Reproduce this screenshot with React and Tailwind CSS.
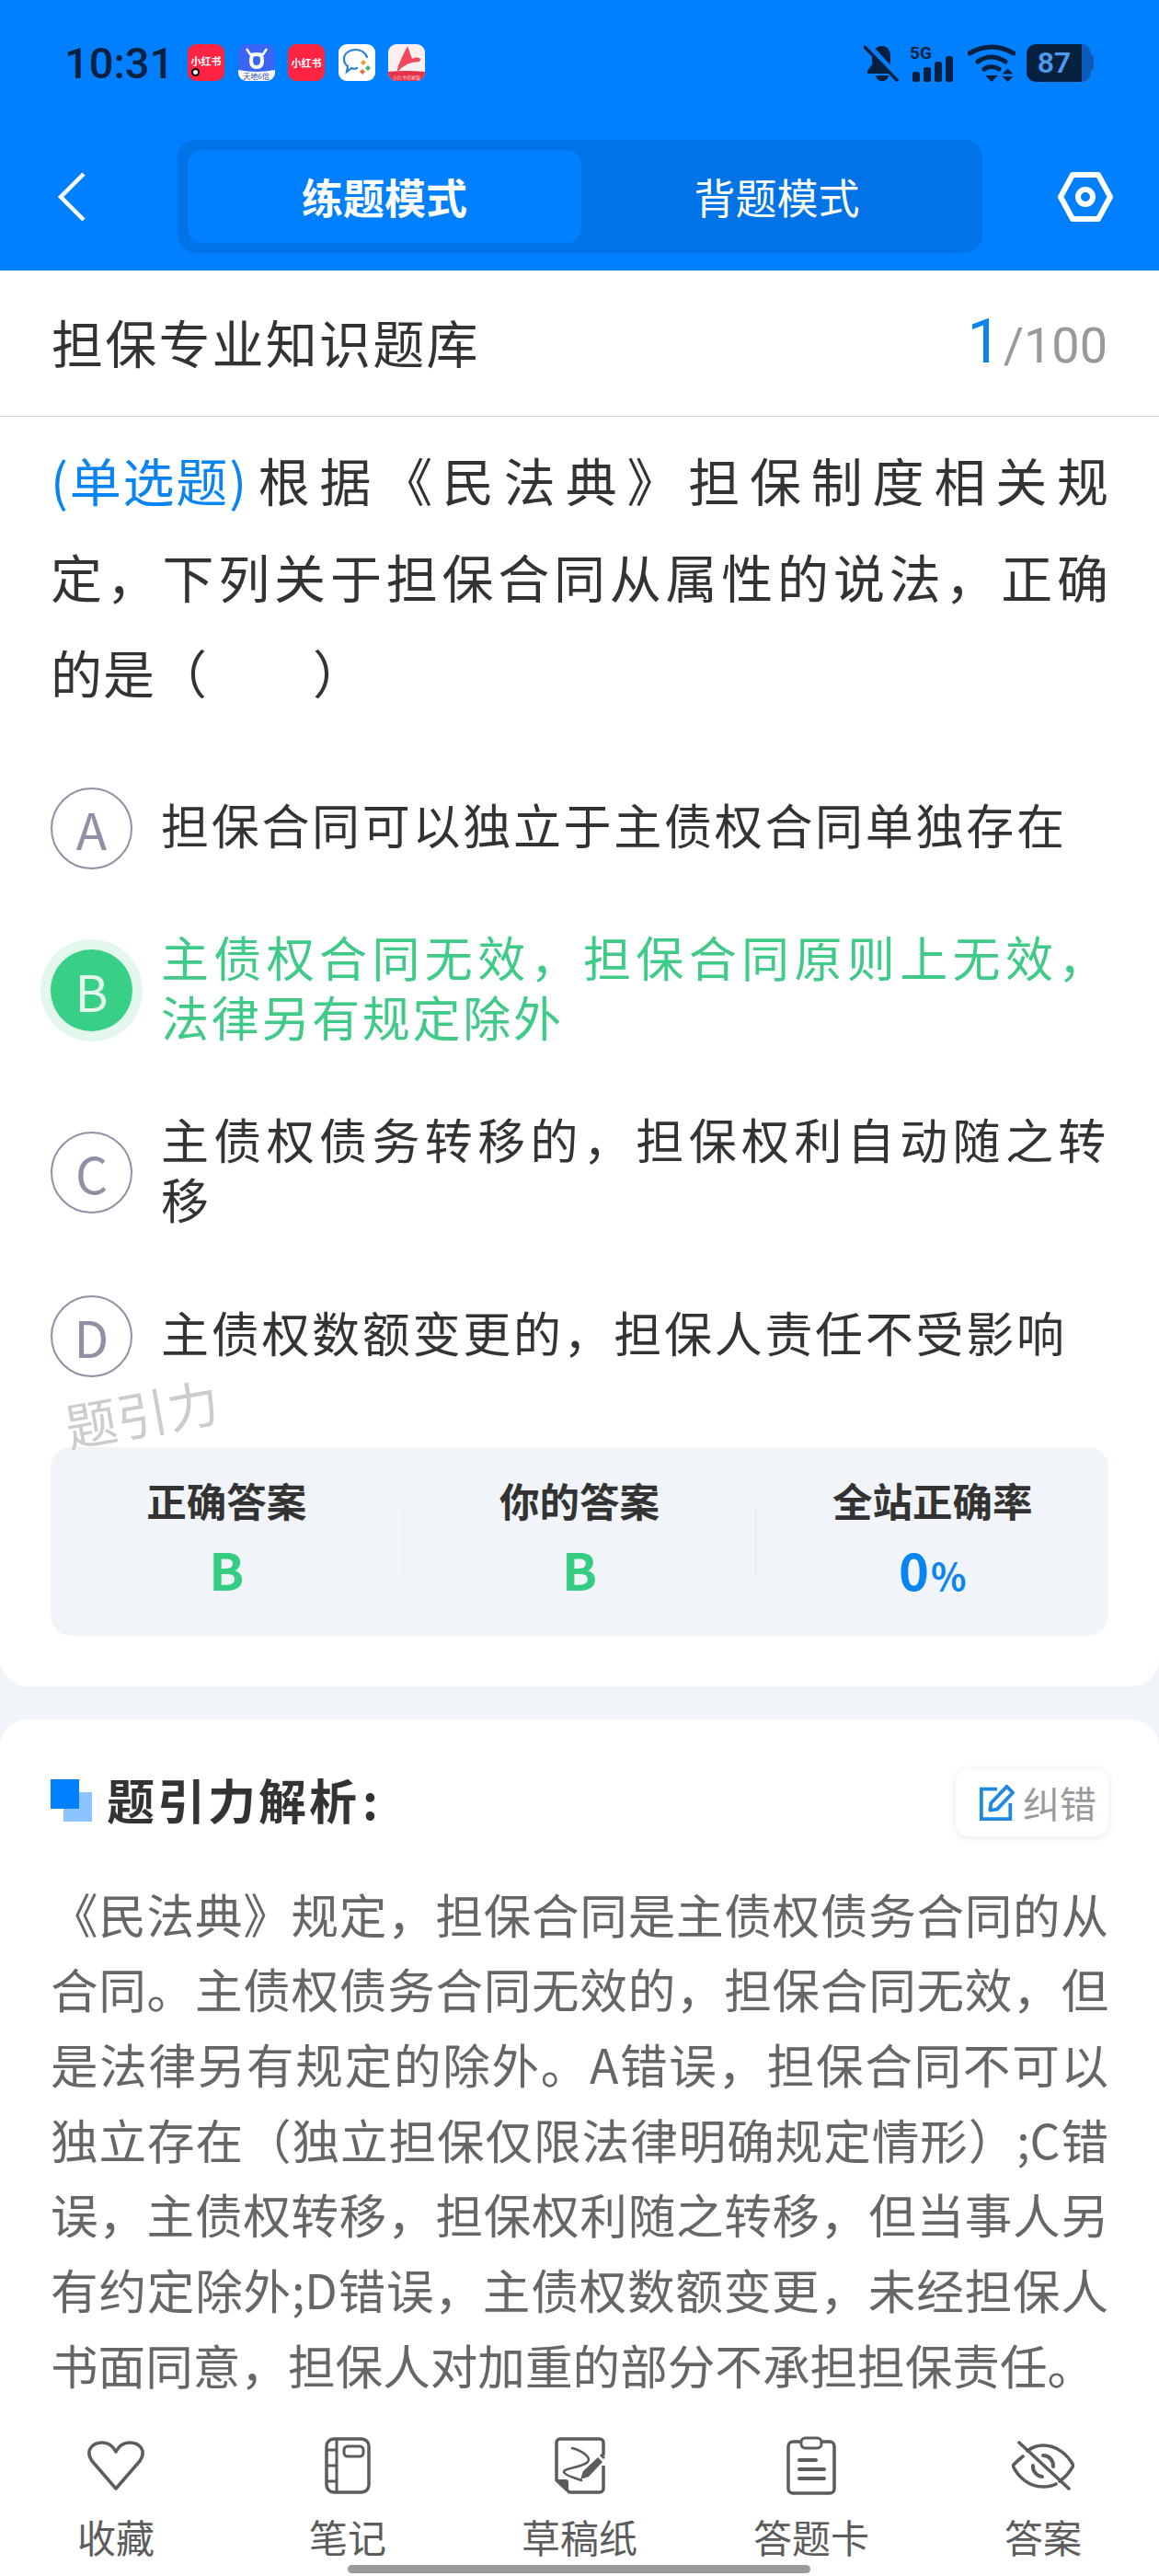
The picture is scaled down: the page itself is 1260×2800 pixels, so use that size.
const cjk = '"Noto Sans CJK SC", "Noto Sans", sans-serif'

const options = [
  { key: 'A', text: '担保合同可以独立于主债权合同单独存在', rowClass: 'mt-[73px]' },
  { key: 'B', text: '主债权合同无效，担保合同原则上无效，法律另有规定除外', active: true, rowClass: 'mt-[67px]' },
  { key: 'C', text: '主债权债务转移的，担保权利自动随之转移', rowClass: 'mt-[68px]' },
  { key: 'D', text: '主债权数额变更的，担保人责任不受影响', rowClass: 'mt-[68px]' },
]

function AppIcons() {
  return (
    <div className="flex gap-[14.5px]">
      <div className="relative flex h-[40px] w-[40px] items-center justify-center rounded-[9px] bg-[#ff2442] text-[11px] font-bold text-white">
        <span className="-mt-[3px] whitespace-nowrap">小红书</span>
        <span className="absolute bottom-[5px] left-[4px] h-[9px] w-[9px] rounded-full border-[2px] border-black bg-white" />
      </div>
      <div className="relative h-[40px] w-[40px] overflow-hidden rounded-[9px] bg-[#3c64f5]">
        <svg viewBox="0 0 40 40" className="h-full w-full">
          <path d="M9 5l4 6h14l4-6" fill="none" stroke="#fff" strokeWidth="2.5" />
          <path d="M20 11c-5 0-6 2-6 7s2 7 6 7 6-2 6-7-1-7-6-7z" fill="none" stroke="#fff" strokeWidth="4" />
          <path d="M0 28q20 4 40 0v12H0z" fill="#fff" />
        </svg>
        <span className="absolute right-0 bottom-0 left-0 text-center text-[8px] leading-[11px] text-[#1d3fae]">天地6倍</span>
      </div>
      <div className="flex h-[40px] w-[40px] items-center justify-center rounded-[9px] bg-[#ff2442] text-[11px] font-bold text-white">
        <span className="whitespace-nowrap">小红书</span>
      </div>
      <div className="h-[40px] w-[40px] rounded-[9px] bg-white">
        <svg viewBox="0 0 40 40" className="h-full w-full">
          <path d="M20 26c-2 1-4 1-6 0l-5 4 1-6c-3-2-4-5-4-8 0-6 6-10 12-10s11 3 13 8" fill="none" stroke="#2a7fd8" strokeWidth="2.2" strokeLinecap="round" />
          <path d="M27 17l3 3-3 3-3-3z" fill="#e8a020" />
          <path d="M32 23l3 3-3 3-3-3z" fill="#3fb56b" />
          <path d="M26 27l3 3-3 3-3-3z" fill="#e86a3a" />
        </svg>
      </div>
      <div className="relative h-[40px] w-[40px] overflow-hidden rounded-[9px] bg-[#fdeef0]">
        <svg viewBox="0 0 40 40" className="h-full w-full">
          <path d="M21 2l5 14c4-2 9-2 9 1 0 3-5 2-9 3-5 1-10 4-16 10-1-4 6-18 11-28z" fill="#f2485c" />
          <path d="M0 30q20-2 40 0v10H0z" fill="#e8324a" />
        </svg>
        <span className="absolute right-0 bottom-0 left-0 text-center text-[5px] leading-[8px] whitespace-nowrap text-[#ffd0d6]">小红书商家版</span>
      </div>
    </div>
  )
}

function StatusIcons() {
  return (
    <div className="flex items-center">
      <svg viewBox="0 0 38 41" className="h-[41px] w-[38px]">
        <path d="M20 2C13 2 9 7 9 13v9l-5 7v3h30v-3l-5-7v-9C29 7 26 2 20 2z" fill="#06203f" />
        <path d="M13 34c1 4 3 6 7 6s6-2 7-6z" fill="#06203f" />
        <path d="M3 0l35 37" stroke="#0080ff" strokeWidth="7" />
        <path d="M1 3l35 36" stroke="#06203f" strokeWidth="3.5" strokeLinecap="round" />
      </svg>
      <svg viewBox="0 0 50 41" className="ml-[12px] h-[41px] w-[50px]">
        <text x="0" y="16" fontSize="19" fontWeight="700" fill="#06203f" fontFamily="Roboto, sans-serif">5G</text>
        <rect x="3" y="30" width="8" height="11" rx="2.5" fill="#06203f" />
        <rect x="15" y="25" width="8" height="16" rx="2.5" fill="#06203f" />
        <rect x="27" y="19" width="8" height="22" rx="2.5" fill="#06203f" />
        <rect x="39" y="13" width="8" height="28" rx="2.5" fill="#06203f" />
      </svg>
      <svg viewBox="0 0 52 41" className="ml-[13px] h-[41px] w-[52px]">
        <path d="M2 10Q26-4 50 10" fill="none" stroke="#06203f" strokeWidth="5" strokeLinecap="round" />
        <path d="M11 19Q25 9 41 19" fill="none" stroke="#06203f" strokeWidth="5" strokeLinecap="round" />
        <path d="M18 27Q25 22 34 27" fill="none" stroke="#06203f" strokeWidth="5" strokeLinecap="round" />
        <path d="M19 34h14l-7 7z" fill="#06203f" />
        <path d="M43.5 26.5l6 6h-12zM37.5 35h12l-6 6z" fill="#06203f" />
      </svg>
      <div className="ml-[12px] flex h-[41px] w-[74px] items-center">
        <div className="flex h-[41px] w-[60px] items-center justify-center rounded-l-[10px] bg-[#06203f] text-[32px] font-semibold text-[#4a9bf0]" style={{ fontFamily: 'Roboto, sans-serif' }}>
          87
        </div>
        <div className="h-[41px] w-[10px] rounded-r-[10px] bg-[#0a5cb8]" />
        <div className="h-[18px] w-[3px] rounded-r-[3px] bg-[#0a5cb8]" />
      </div>
    </div>
  )
}

function OptionRow({ option }) {
  return (
    <div className={`flex items-center ${option.rowClass}`}>
      {option.active ? (
        <div className="mx-[-11px] flex h-[111px] w-[111px] shrink-0 items-center justify-center rounded-full bg-[#e3f7ec]">
          <div className="flex h-[89px] w-[89px] items-center justify-center rounded-full bg-[#38d086] text-[55px] text-[#e3f7ec]">
            {option.key}
          </div>
        </div>
      ) : (
        <div className="flex h-[89px] w-[89px] shrink-0 items-center justify-center rounded-full border-[2px] border-[#8e90a6] text-[55px] text-[#8e90a6]">
          {option.key}
        </div>
      )}
      <p
        className={`ml-[31px] flex-1 -translate-y-[5px] text-justify text-[52px] leading-[65px] tracking-[2.7px] ${
          option.active ? 'text-[#3fcb87]' : 'text-[#333333]'
        }`}
      >
        {option.text}
      </p>
    </div>
  )
}

function Stat({ label, children }) {
  return (
    <div className="flex flex-1 flex-col items-center">
      <p className="text-[43.5px] leading-[56px] font-bold text-[#333333]">{label}</p>
      <div className="mt-[16px] h-[60px] text-[56px] leading-[60px] font-bold">{children}</div>
    </div>
  )
}

function NavItem({ label, children }) {
  return (
    <div className="flex flex-1 flex-col items-center">
      <div className="flex h-[72px] items-center justify-center">{children}</div>
      <p className="mt-[16px] text-[42px] leading-[50px] text-[#5c5c5c]">{label}</p>
    </div>
  )
}

export default function App() {
  return (
    <div className="relative flex h-[2800px] w-[1260px] flex-col overflow-hidden bg-[#f1f5f9]" style={{ fontFamily: cjk }}>
      <header className="h-[294px] shrink-0 bg-[#0080ff]">
        <div className="flex h-[132px] items-center justify-between pt-[4px] pr-[70px] pl-[70px]">
          <div className="flex items-center">
            <span className="w-[134px] text-[47px] leading-none font-medium text-[#06203f]" style={{ fontFamily: 'Roboto, sans-serif' }}>10:31</span>
            <AppIcons />
          </div>
          <StatusIcons />
        </div>
        <div className="mt-[20px] flex items-center pl-[62px]">
          <svg viewBox="0 0 32 54" className="h-[54px] w-[32px]">
            <path d="M29 2L4 27l25 25" fill="none" stroke="#fff" strokeWidth="4.5" />
          </svg>
          <div className="ml-[99px] flex h-[123px] w-[875px] rounded-[20px] bg-[#0073e6] p-[11px]">
            <div className="flex w-[428px] items-center justify-center rounded-[16px] bg-[#0080ff] text-[45px] font-bold text-white">
              练题模式
            </div>
            <div className="flex flex-1 items-center justify-center text-[45px] text-white">背题模式</div>
          </div>
          <svg viewBox="0 0 60 54" className="ml-[82px] h-[54px] w-[60px]">
            <path d="M16 3h28l13 24-13 24H16L3 27z" fill="none" stroke="#fff" strokeWidth="6" strokeLinejoin="round" />
            <circle cx="30" cy="27" r="8" fill="none" stroke="#fff" strokeWidth="6" />
          </svg>
        </div>
      </header>

      <section className="shrink-0 rounded-b-[30px] bg-white pb-[55px]">
        <div className="flex h-[159px] items-center justify-between border-b border-[#d9d9d9] px-[56px] pb-[4px]">
          <h1 className="text-[56px] tracking-[2.2px] text-[#333333]">担保专业知识题库</h1>
          <p className="flex items-baseline text-[#999999]">
            <span className="text-[66px] text-[#0a84f0]" style={{ fontFamily: 'Roboto, sans-serif' }}>1</span>
            <span className="ml-[2px] text-[54px]" style={{ fontFamily: 'Roboto, sans-serif' }}>/100</span>
          </p>
        </div>

        <div className="px-[55px]">
          <div className="mt-[16px] text-[56px] leading-[104.5px] text-[#333333]">
            <p className="text-justify [text-align-last:justify]">
              <span className="inline-block tracking-[1.8px] text-[#0a84f0]">(单选题)</span>
              根据《民法典》担保制度相关规
            </p>
            <p className="text-justify [text-align-last:justify]">定，下列关于担保合同从属性的说法，正确</p>
            <p className="tracking-[1px]">的是（　　）</p>
          </div>

          {options.map((option) => (
            <OptionRow key={option.key} option={option} />
          ))}

          <div className="relative mt-[76px] flex h-[205px] items-start rounded-[22px] bg-[#f1f5f9] pt-[30px]">
            <span className="absolute top-[-78px] left-[15px] -rotate-[10deg] text-[56px] leading-[80px] text-[#cccccc]">题引力</span>
            <Stat label="正确答案"><span className="text-[#35cc83]">B</span></Stat>
            <div className="mt-[36px] h-[74px] w-px bg-[#e6e9ee]" />
            <Stat label="你的答案"><span className="text-[#35cc83]">B</span></Stat>
            <div className="mt-[36px] h-[74px] w-px bg-[#e6e9ee]" />
            <Stat label="全站正确率">
              <span className="text-[#0a84f0]">0<span className="ml-[2px] text-[40px]">%</span></span>
            </Stat>
          </div>
        </div>
      </section>

      <section className="mt-[36px] min-h-0 flex-1 overflow-hidden rounded-t-[30px] bg-white px-[55px]">
        <div className="mt-[52px] flex items-center justify-between">
          <div className="flex items-center">
            <svg viewBox="0 0 45 46" className="h-[46px] w-[45px]">
              <rect x="14" y="14" width="31" height="32" fill="#8cc4ff" />
              <rect x="0" y="0" width="31" height="32" fill="#0080ff" />
            </svg>
            <h2 className="ml-[16px] -translate-y-[2px] text-[52px] leading-[73px] font-bold tracking-[3px] text-[#333333]">
              题引力解析<span className="ml-[3px]">:</span>
            </h2>
          </div>
          <div className="flex h-[73px] w-[166px] translate-y-[2px] items-center rounded-[14px] bg-white pl-[25px] text-[40px] text-[#999999] shadow-[0_1px_8px_rgba(0,0,0,0.1)]">
            <svg viewBox="0 0 42 42" className="mr-[8px] h-[40px] w-[40px] shrink-0">
              <path d="M21 6H3v34h33V22" fill="none" stroke="#1e88e5" strokeWidth="4" />
              <path d="M13 30l1-8L32 3l7 7-18 19z" fill="none" stroke="#1e88e5" strokeWidth="4" strokeLinejoin="round" />
            </svg>
            纠错
          </div>
        </div>
        <p className="mt-[45px] text-justify text-[51.6px] leading-[81.7px] text-[#666666]">
          《民法典》规定，担保合同是主债权债务合同的从合同。主债权债务合同无效的，担保合同无效，但是法律另有规定的除外。A错误，担保合同不可以独立存在（独立担保仅限法律明确规定情形）;C错误，主债权转移，担保权利随之转移，但当事人另有约定除外;D错误，主债权数额变更，未经担保人书面同意，担保人对加重的部分不承担担保责任。
        </p>
      </section>

      <nav className="flex h-[170px] shrink-0 bg-white pt-[14px]">
        <NavItem label="收藏">
          <svg viewBox="0 0 62 54" className="h-[54px] w-[62px]">
            <path d="M31 52L5 22C-3 10 6 2 16 2c7 0 12 4 15 10 3-6 8-10 15-10 10 0 19 8 11 20z" fill="none" stroke="#5c5c5c" strokeWidth="3.5" strokeLinejoin="round" />
          </svg>
        </NavItem>
        <NavItem label="笔记">
          <svg viewBox="0 0 50 62" className="h-[62px] w-[50px]">
            <rect x="2" y="2" width="46" height="58" rx="8" fill="none" stroke="#5c5c5c" strokeWidth="3.5" />
            <path d="M13 2v58M2 14h11M2 31h11M2 48h11" stroke="#5c5c5c" strokeWidth="3" />
            <rect x="21" y="10" width="21" height="11" rx="4" fill="none" stroke="#5c5c5c" strokeWidth="3" />
          </svg>
        </NavItem>
        <NavItem label="草稿纸">
          <svg viewBox="0 0 55 62" className="h-[62px] w-[55px]">
            <path d="M53 31v25a4 4 0 0 1-4 4H16L2 47V6a4 4 0 0 1 4-4h43a4 4 0 0 1 4 4v14" fill="none" stroke="#5c5c5c" strokeWidth="3.5" strokeLinejoin="round" />
            <path d="M2 46h10q3 0 3 3v11z" fill="#5c5c5c" />
            <path d="M19 12c11 3 21 10 17 15-6 6-27 7-26 11 1 4 12 6 19 9" fill="none" stroke="#5c5c5c" strokeWidth="2.6" strokeLinecap="round" />
            <path d="M47 22l5 5-15 16-9 3 3-9z" fill="#5c5c5c" />
            <path d="M50 19l4 4" stroke="#5c5c5c" strokeWidth="3" />
          </svg>
        </NavItem>
        <NavItem label="答题卡">
          <svg viewBox="0 0 54 64" className="h-[64px] w-[54px]">
            <path d="M14 6H7a5 5 0 0 0-5 5v46a5 5 0 0 0 5 5h40a5 5 0 0 0 5-5V11a5 5 0 0 0-5-5h-7" fill="none" stroke="#5c5c5c" strokeWidth="3.5" strokeLinecap="round" />
            <rect x="16" y="2" width="22" height="11" rx="4.5" fill="none" stroke="#5c5c5c" strokeWidth="3" />
            <path d="M14 26h18M14 36h27M14 46h27" stroke="#5c5c5c" strokeWidth="4" strokeLinecap="round" />
          </svg>
        </NavItem>
        <NavItem label="答案">
          <svg viewBox="0 0 68 54" className="h-[54px] w-[68px]">
            <path d="M17 11c5-4 11-6 17-6 14 0 26 9 33 22-4 7-9 13-15 17M12 17c-4 3-8 7-11 10 6 13 18 23 33 23 5 0 10-1 14-3" fill="none" stroke="#5c5c5c" strokeWidth="3.6" strokeLinecap="round" />
            <path d="M34 16a11 11 0 0 1 11 12M23 27a11 11 0 0 0 10 12" fill="none" stroke="#5c5c5c" strokeWidth="4" strokeLinecap="round" />
            <path d="M8 2l54 50" stroke="#5c5c5c" strokeWidth="3.6" strokeLinecap="round" />
          </svg>
        </NavItem>
      </nav>

      <div className="absolute bottom-[3px] left-[378px] h-[9px] w-[503px] rounded-full bg-[#9a9a9a]" />
    </div>
  )
}
